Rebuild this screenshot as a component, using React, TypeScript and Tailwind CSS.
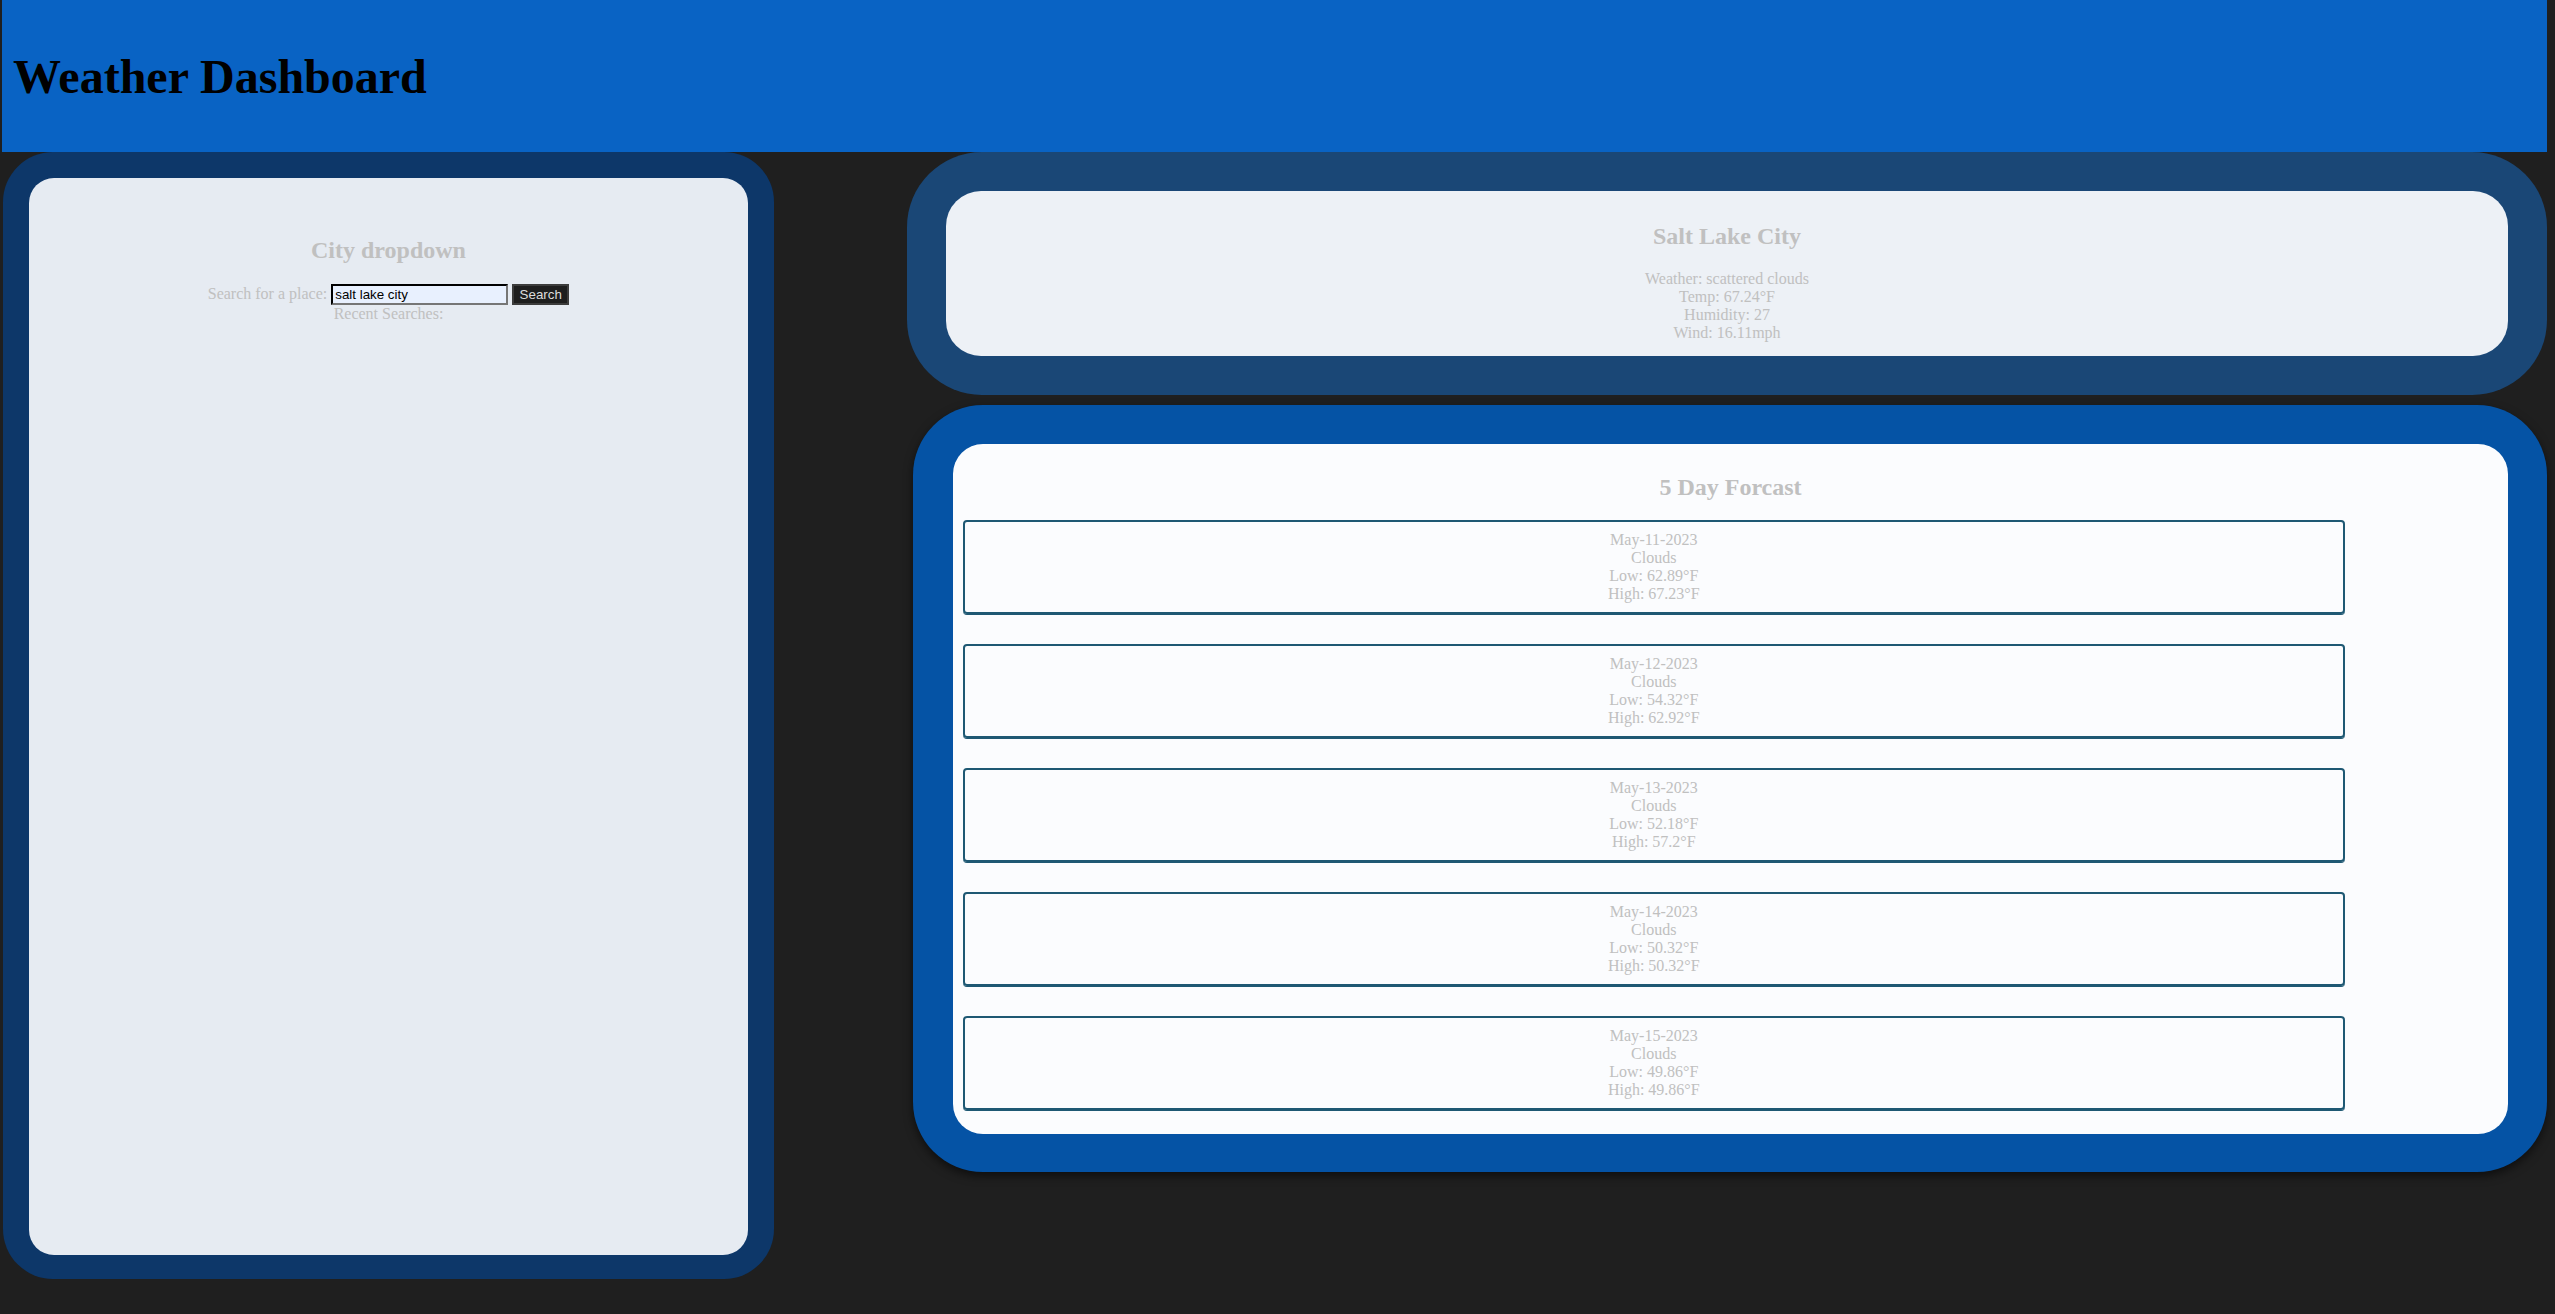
const FORECAST = [
  { date: 'May-11-2023', weather: 'Clouds', low: '62.89', high: '67.23' },
  { date: 'May-12-2023', weather: 'Clouds', low: '54.32', high: '62.92' },
  { date: 'May-13-2023', weather: 'Clouds', low: '52.18', high: '57.2' },
  { date: 'May-14-2023', weather: 'Clouds', low: '50.32', high: '50.32' },
  { date: 'May-15-2023', weather: 'Clouds', low: '49.86', high: '49.86' },
]

function CityPanel() {
  return (
    <section className="w-[771px] h-[1127px] rounded-[50px] bg-[#0d3769] p-[26px] pb-[24px]">
      <div className="h-[1077px] rounded-[25px] bg-[#e6ebf2] pt-[39px] text-center">
        <h2 className="mt-[20px] mb-[20px] text-[24px] font-bold">City dropdown</h2>
        <div>
          Search for a place:{' '}
          <input
            type="text"
            defaultValue="salt lake city"
            className="inline-block h-[21px] w-[177px] border-2 border-t-black border-l-black border-r-[#767676] border-b-[#767676] bg-[#e8f0fe] px-[2px] py-[1px] text-[13.33px] leading-[normal] text-black outline-none font-['Liberation_Sans',Arial,sans-serif]"
          />{' '}
          <button className="inline-block h-[21px] w-[57px] border-2 border-[#3c3c3c] bg-[#1e1e1e] px-[5px] text-[13.33px] leading-[normal] text-[#dcdcdc] font-['Liberation_Sans',Arial,sans-serif]">
            Search
          </button>
        </div>
        <div>Recent Searches:</div>
      </div>
    </section>
  )
}

function CurrentPanel() {
  return (
    <section className="w-[1640px] h-[243px] rounded-[75px] bg-[#1a4776] p-[39px]">
      <div className="h-[165px] rounded-[35px] bg-[#edf1f6] pt-[12px] text-center">
        <h2 className="mt-[20px] mb-[20px] text-[24px] font-bold">Salt Lake City</h2>
        <div>Weather: scattered clouds</div>
        <div>Temp: 67.24°F</div>
        <div>Humidity: 27</div>
        <div>Wind: 16.11mph</div>
      </div>
    </section>
  )
}

function ForecastPanel() {
  return (
    <section className="ml-[6px] mt-[10px] w-[1634px] h-[767px] rounded-[70px] bg-[#0553a5] p-[39px] pl-[40px] shadow-[0_4px_10px_rgba(0,0,0,0.55)]">
      <div className="h-[690px] rounded-[30px] bg-[#fbfcfe] p-[10px]">
        <h2 className="mt-[20px] mb-[19px] text-center text-[24px] font-bold">5 Day Forcast</h2>
        {FORECAST.map(day => (
          <div
            key={day.date}
            className="mb-[30px] h-[94px] w-[90%] rounded-[4px] border-2 border-[#1e5873] px-[8px] pt-[9px] text-center shadow-[0_1px_0_#1e5873]"
          >
            <div>{day.date}</div>
            <div>{day.weather}</div>
            <div>Low: {day.low}°F</div>
            <div>High: {day.high}°F</div>
          </div>
        ))}
      </div>
    </section>
  )
}

export default function App() {
  return (
    <div className="min-h-screen bg-[#1f1f1f] text-[16px] leading-[normal] text-[#c0c0c0] font-['Liberation_Serif','Times_New_Roman',serif]">
      <div className="ml-[2px] w-[2545px]">
        <header className="flex h-[152px] items-center bg-[#0963c4]">
          <h1 className="ml-[11px] text-[48px] font-bold text-black">Weather Dashboard</h1>
        </header>
        <div className="flex items-start pl-[1px]">
          <CityPanel />
          <div className="ml-[133px] flex flex-col">
            <CurrentPanel />
            <ForecastPanel />
          </div>
        </div>
      </div>
    </div>
  )
}
